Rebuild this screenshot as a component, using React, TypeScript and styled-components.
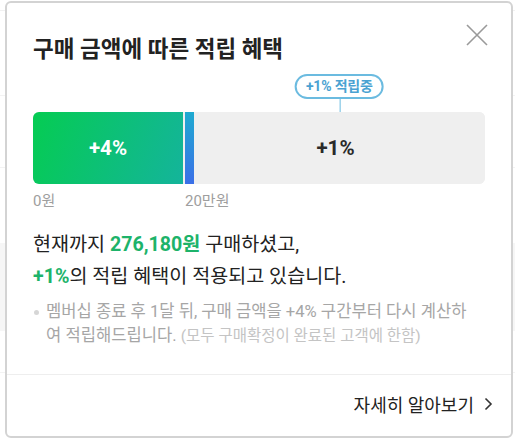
import React from "react";
import styled, { createGlobalStyle } from "styled-components";

const GlobalStyle = createGlobalStyle`
  html, body { margin: 0; padding: 0; }
  body {
    font-family: Roboto, "Noto Sans CJK KR", "Noto Sans", sans-serif;
    background: #fff;
    color: #222;
  }
  * { box-sizing: border-box; }
`;

const Page = styled.div`
  width: 515px;
  height: 440px;
  padding: 1px 2px 2px 5px;
  background:
    linear-gradient(#f1f1f1, #f1f1f1) 0 10px / 100% 1px no-repeat,
    linear-gradient(#f3f3f3, #f3f3f3) 0 95px / 100% 1px no-repeat,
    linear-gradient(#f3f3f3, #f3f3f3) 0 167px / 100% 1px no-repeat,
    linear-gradient(#f6f6f6, #f6f6f6) 0 243px / 100% 88px no-repeat,
    linear-gradient(#f3f3f3, #f3f3f3) 0 372px / 100% 1px no-repeat,
    #fff;
`;

const Modal = styled.div`
  width: 508px;
  height: 437px;
  background: #fff;
  border: 2px solid #d3d3d3;
  border-radius: 6px;
  display: flex;
  flex-direction: column;
`;

const Body = styled.div`
  flex: 1;
  padding: 0 26px;
`;

const Header = styled.div`
  display: flex;
  justify-content: space-between;
  align-items: flex-start;
  padding-top: 21px;
  margin-right: -3px;
`;

const Title = styled.h2`
  margin: 11px 0 0;
  font-size: 22.5px;
  line-height: 29px;
  font-weight: 700;
  color: #222;
`;

const CloseButton = styled.button`
  width: 22px;
  height: 22px;
  padding: 0;
  border: 0;
  background: none;
  cursor: pointer;
  display: block;
`;

const BarArea = styled.div`
  position: relative;
  margin-top: 10px;
  padding-top: 38px;
`;

const Badge = styled.div`
  position: absolute;
  top: 0;
  transform: translateX(-50%);
  height: 25px;
  padding: 0 9px;
  border: 2px solid #6bbbe0;
  border-radius: 13px;
  background: #fff;
  color: #4aa2d2;
  font-size: 14px;
  font-weight: 700;
  line-height: 21px;
  white-space: nowrap;
  letter-spacing: -0.2px;
  &::after {
    content: "";
    position: absolute;
    left: 50%;
    top: 23px;
    width: 1px;
    height: 13px;
    background: #6bbbe0;
  }
`;

const Bar = styled.div`
  display: flex;
  height: 72px;
  border-radius: 6px;
  overflow: hidden;
  background: #efefef;
`;

const Segment = styled.div<{ $w?: number; $kind: "green" | "blue" | "rest" }>`
  display: flex;
  align-items: center;
  justify-content: center;
  flex: ${(p) => (p.$w ? `0 0 ${p.$w}px` : "1")};
  font-size: 20.5px;
  font-weight: 700;
  color: ${(p) => (p.$kind === "green" ? "#fff" : "#2a2a2a")};
  background: ${(p) =>
    p.$kind === "green"
      ? "linear-gradient(110deg, #05cc52 0%, #14b49b 100%)"
      : p.$kind === "blue"
      ? "linear-gradient(180deg, #1eaad0 0%, #3b6fe8 100%)"
      : "#efefef"};
  margin-right: ${(p) => (p.$kind === "green" ? "2px" : "0")};
  padding-right: ${(p) => (p.$kind === "rest" ? "8px" : "0")};
`;

const Labels = styled.div`
  display: flex;
  margin-top: 8px;
  font-size: 15px;
  line-height: 18px;
  color: #9e9e9e;
`;

const Label = styled.span<{ $w?: number }>`
  flex: ${(p) => (p.$w ? `0 0 ${p.$w}px` : "1")};
`;

const Summary = styled.p`
  margin: 19px 0 0;
  font-size: 19.6px;
  line-height: 32px;
  color: #222;
`;

const Green = styled.strong`
  color: #1db36a;
  font-weight: 700;
`;

const Note = styled.div`
  display: grid;
  grid-template-columns: 13px 1fr;
  margin-top: 7px;
  padding-right: 8px;
  font-size: 16.6px;
  line-height: 24px;
  color: #a6a6a6;
`;

const Dot = styled.span`
  width: 5px;
  height: 5px;
  border-radius: 50%;
  background: #d6d6d6;
  margin: 10px 0 0 1px;
`;

const Sub = styled.span`
  color: #c4c4c4;
  font-size: 15.5px;
`;

const Footer = styled.div`
  height: 62px;
  border-top: 1px solid #eeeeee;
  display: flex;
  justify-content: flex-end;
  align-items: center;
  padding: 0 18px 3px 0;
`;

const More = styled.a`
  display: flex;
  align-items: center;
  gap: 10px;
  font-size: 18px;
  color: #222;
  text-decoration: none;
  cursor: pointer;
`;

const BAR_W = 453;
const CURRENT = 307;

export default function App() {
  return (
    <>
      <GlobalStyle />
      <Page>
        <Modal>
          <Body>
            <Header>
              <Title>구매 금액에 따른 적립 혜택</Title>
              <CloseButton aria-label="닫기">
                <svg width="22" height="22" viewBox="0 0 22 22">
                  <path d="M1 1 L21 21 M21 1 L1 21" stroke="#9a9a9a" strokeWidth="1.6" fill="none" />
                </svg>
              </CloseButton>
            </Header>
            <BarArea>
              <Badge style={{ left: `${(CURRENT / BAR_W) * 100}%` }}>+1% 적립중</Badge>
              <Bar>
                <Segment $w={150} $kind="green">+4%</Segment>
                <Segment $w={9} $kind="blue" />
                <Segment $kind="rest">+1%</Segment>
              </Bar>
            </BarArea>
            <Labels>
              <Label $w={152}>0원</Label>
              <Label>20만원</Label>
            </Labels>
            <Summary>
              현재까지 <Green>276,180원</Green> 구매하셨고,
              <br />
              <Green>+1%</Green>의 적립 혜택이 적용되고 있습니다.
            </Summary>
            <Note>
              <Dot />
              <span>
                멤버십 종료 후 1달 뒤, 구매 금액을 +4% 구간부터 다시 계산하여 적립해드립니다.{" "}
                <Sub>(모두 구매확정이 완료된 고객에 한함)</Sub>
              </span>
            </Note>
          </Body>
          <Footer>
            <More>
              자세히 알아보기
              <svg width="9" height="14" viewBox="0 0 9 14">
                <path d="M1.5 1.5 L7 7 L1.5 12.5" stroke="#333" strokeWidth="1.6" fill="none" />
              </svg>
            </More>
          </Footer>
        </Modal>
      </Page>
    </>
  );
}
